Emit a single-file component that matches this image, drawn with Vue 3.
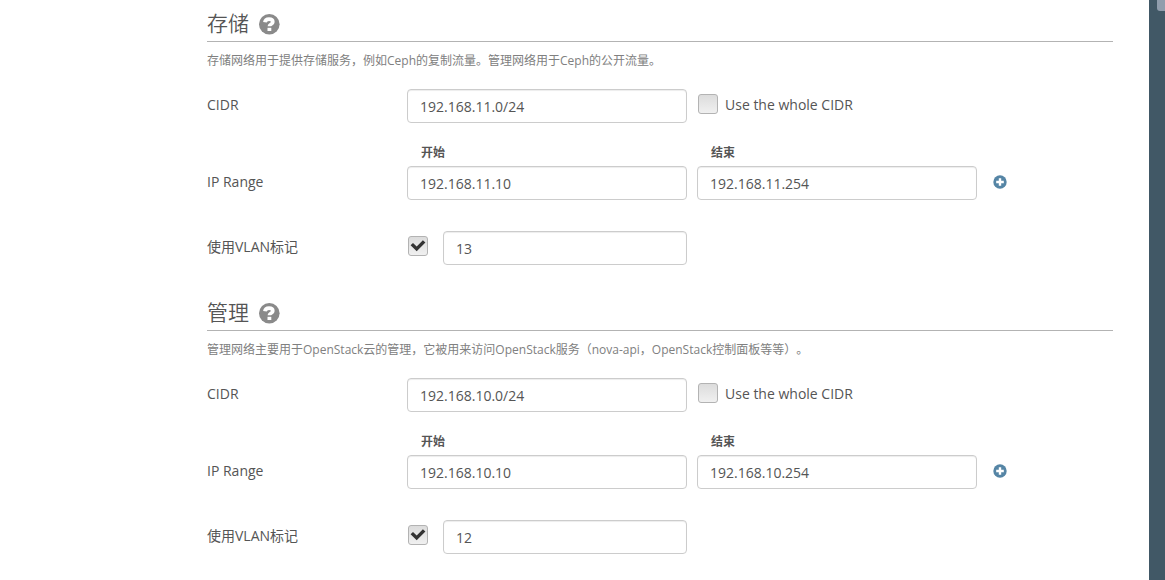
<script setup>
import { reactive } from 'vue'

const networks = reactive([
  {
    id: 'storage',
    title: '存储',
    description: '存储网络用于提供存储服务，例如Ceph的复制流量。管理网络用于Ceph的公开流量。',
    cidr: '192.168.11.0/24',
    whole: false,
    start: '192.168.11.10',
    end: '192.168.11.254',
    tagged: true,
    vlan: '13'
  },
  {
    id: 'management',
    title: '管理',
    description: '管理网络主要用于OpenStack云的管理，它被用来访问OpenStack服务（nova-api，OpenStack控制面板等等）。',
    cidr: '192.168.10.0/24',
    whole: false,
    start: '192.168.10.10',
    end: '192.168.10.254',
    tagged: true,
    vlan: '12'
  }
])
</script>

<template>
  <div class="page">
    <main class="content">
      <section v-for="net in networks" :key="net.id" class="network">
        <h3 class="title">
          <span>{{ net.title }}</span>
          <button type="button" class="help" aria-label="Help">
            <svg viewBox="0 0 22 22" width="22" height="22">
              <circle cx="11.3" cy="11.3" r="10.3" fill="#8a8a8a" />
              <path d="M6.900 9.200C7.200 7 8.800 6.100 11 6.100c2.200 0 3.800 1 3.800 2.800 0 2.400-3.400 2.200-3.400 4.300" fill="none" stroke="#fff" stroke-width="3.700" />
              <rect x="9.500" y="14.800" width="3.800" height="3.200" fill="#fff" />
            </svg>
          </button>
        </h3>
        <p class="description">{{ net.description }}</p>

        <div class="row">
          <label class="name" :for="net.id + '-cidr'">CIDR</label>
          <input :id="net.id + '-cidr'" v-model="net.cidr" class="field" type="text" />
          <label class="whole">
            <input v-model="net.whole" class="check" type="checkbox" />
            <span>Use the whole CIDR</span>
          </label>
        </div>

        <div class="row range">
          <span class="name">IP Range</span>
          <div class="column">
            <label class="heading" :for="net.id + '-start'">开始</label>
            <input :id="net.id + '-start'" v-model="net.start" class="field" type="text" />
          </div>
          <div class="column">
            <label class="heading" :for="net.id + '-end'">结束</label>
            <input :id="net.id + '-end'" v-model="net.end" class="field" type="text" />
          </div>
          <button type="button" class="add" aria-label="Add range">
            <svg viewBox="0 0 14 14" width="14" height="14">
              <circle cx="7" cy="7" r="6.700" fill="#5585a5" />
              <path d="M7 3.200v7.600M3.200 7h7.600" stroke="#fff" stroke-width="2.400" />
            </svg>
          </button>
        </div>

        <div class="row vlan">
          <label class="name" :for="net.id + '-tagged'">使用VLAN标记</label>
          <span class="tick">
            <input :id="net.id + '-tagged'" v-model="net.tagged" class="check" type="checkbox" />
            <svg v-if="net.tagged" class="mark" viewBox="0 0 20 20" width="20" height="20">
              <path d="M2.600 9.300l2.400-2.400 3.700 3.500 6.200-6.200 2.500 2.400-8.700 8.700z" fill="#333" />
            </svg>
          </span>
          <input v-model="net.vlan" class="field tag" type="text" aria-label="VLAN" />
        </div>
      </section>
    </main>
    <aside class="rail"><span class="thumb"></span></aside>
  </div>
</template>

<style>
body {
  background: #fff;
}
</style>

<style scoped>
.page {
  display: flex;
  min-height: 100vh;
  color: #555;
  font: 14px/20px "Open Sans", "Noto Sans CJK SC", sans-serif;
}
.content {
  flex: 1;
  min-width: 0;
  padding: 0 36px 0 207px;
}
.network {
  padding-bottom: 24px;
}
.network:last-child {
  padding-bottom: 0;
}
.title {
  display: flex;
  align-items: center;
  gap: 9px;
  box-sizing: border-box;
  height: 42px;
  margin: 0;
  padding-top: 4px;
  border-bottom: 1px solid #b3b3b3;
  font-size: 21px;
  line-height: 30px;
  font-weight: 350;
}
button {
  display: flex;
  padding: 0;
  border: 0;
  background: none;
  cursor: pointer;
}
.help {
  padding-top: 2px;
}
.description {
  margin: 9px 0 18px;
  color: #808080;
  font-size: 12px;
  line-height: 20px;
  text-spacing-trim: space-all;
}
.row {
  display: flex;
  align-items: flex-start;
}
.name {
  flex: 0 0 200px;
  padding-top: 6px;
}
.field {
  box-sizing: border-box;
  width: 280px;
  height: 34px;
  margin: 0;
  padding: 0 12px;
  border: 1px solid #ccc;
  border-radius: 4px;
  outline: 0;
  background: #fff;
  box-shadow: inset 0 1px 1px rgba(0, 0, 0, 0.075);
  color: #555;
  font: inherit;
}
.whole {
  display: flex;
  align-items: flex-start;
  gap: 7px;
  margin: 5px 0 0 11px;
}
.whole span {
  padding-top: 1px;
}
.check {
  appearance: none;
  box-sizing: border-box;
  width: 20px;
  height: 20px;
  margin: 0;
  border: 1px solid #b3b3b3;
  border-radius: 3px;
  background: linear-gradient(#dcdcdc, #f0f0f0);
}
.range {
  margin-top: 20px;
}
.range .name {
  padding-top: 29px;
}
.column {
  display: flex;
  flex-direction: column;
  gap: 3px;
  margin-right: 10px;
}
.heading {
  padding-left: 14px;
  font-size: 12px;
  font-weight: 700;
}
.add {
  margin: 32px 0 0 6px;
}
.vlan {
  margin-top: 31px;
}
.tick {
  position: relative;
  display: flex;
  margin: 5px 15px 0 1px;
}
.mark {
  position: absolute;
  inset: 0;
  pointer-events: none;
}
.tag {
  width: 244px;
}
.rail {
  flex: 0 0 16px;
  background: #415866;
}
.thumb {
  display: block;
  height: 11px;
  margin-left: 8px;
  border-radius: 0 0 0 3px;
  background: #909dad;
}
</style>
